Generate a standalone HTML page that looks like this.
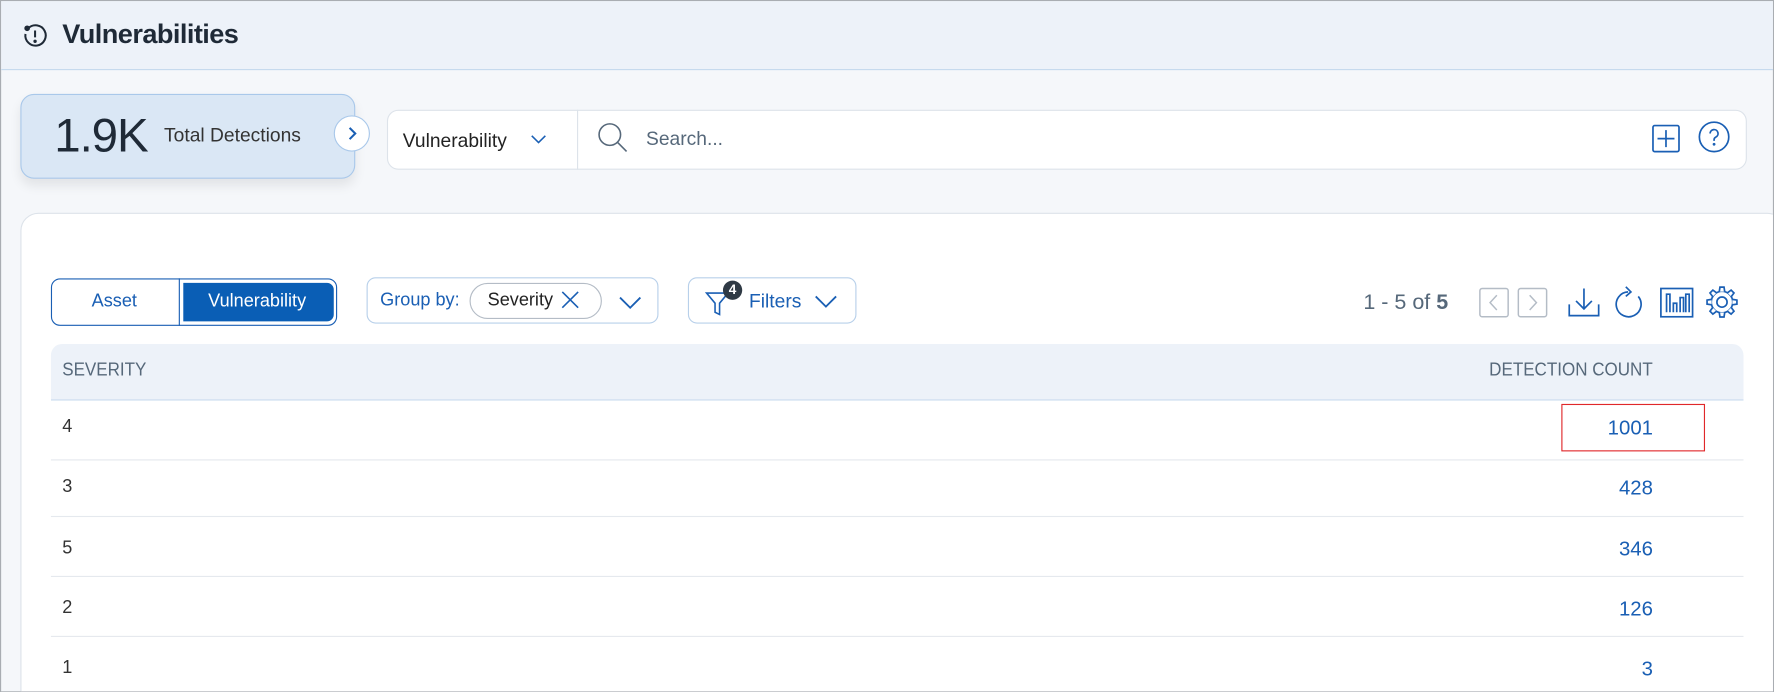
<!DOCTYPE html>
<html><head><meta charset="utf-8"><style>
html,body{margin:0;padding:0;width:1774px;height:692px;overflow:hidden;background:#f5f7fa}
#w{position:absolute;left:0;top:0;width:1568px;height:612px;transform:scale(1.1314);transform-origin:0 0;font-family:"Liberation Sans",sans-serif;background:#f5f7fa;box-sizing:border-box;border:1px solid #a9adb2;overflow:hidden}
.a{position:absolute}
.hdr{left:0;top:0;width:1568px;height:60px;background:#edf2f9;border-bottom:1px solid #c5d9ee}
.t{left:54px;top:16px;font-size:24px;font-weight:bold;color:#1f2a37;letter-spacing:-0.5px}
.card{left:17px;top:82px;width:296px;height:75px;background:#dae7f5;border:1px solid #a9c8ea;border-radius:12px;box-shadow:0 6px 10px rgba(0,0,0,.08);box-sizing:border-box}
.srch{left:341px;top:96px;width:1202px;height:53px;background:#fff;border:1px solid #dde3ea;border-radius:10px;box-sizing:border-box}
.panel{left:17px;top:187px;width:1560px;height:440px;background:#fff;border:1px solid #dde3ea;border-radius:16px;box-sizing:border-box}
.blue{color:#1a5fb4}
.box{border:1px solid #b8d0ea;border-radius:8px;box-sizing:border-box;background:#fff}
.th{left:44px;top:303px;width:1496px;height:50px;background:#edf2f9;border-radius:10px 10px 0 0;border-bottom:1px solid #c5d9ee;box-sizing:border-box}
.hc{font-family:"Liberation Sans Narrow","Liberation Sans",sans-serif;font-size:16px;color:#56687a;top:318px;transform:scaleX(.94)}
.row{left:44px;width:1496px;height:53px;border-bottom:1px solid #e5e9ee;box-sizing:border-box}
.c1{left:54px;font-size:16px;color:#333}
.c2{right:106px;font-size:18px;color:#1a5fb4;text-align:right}
</style></head><body><div id="w">
<div class="a hdr"></div>
<svg class="a" style="left:18px;top:19px" width="24" height="24" viewBox="0 0 24 24" fill="none" stroke="#1f2a37" stroke-width="1.8"><path d="M6 5 A9 9 0 1 1 3.5 10"/><circle cx="5" cy="5" r="1.6" fill="#1f2a37"/><path d="M12 7v6"/><circle cx="12" cy="16.5" r=".6" fill="#1f2a37"/></svg>
<div class="a t">Vulnerabilities</div>
<div class="a card"></div>
<div class="a" style="left:47px;top:95px;font-size:42px;color:#1f2a37;letter-spacing:-1px">1.9K</div>
<div class="a" style="left:144px;top:109px;font-size:17px;color:#333">Total Detections</div>
<div class="a" style="left:294px;top:101px;width:32px;height:32px;border-radius:50%;background:#fff;border:1px solid #a9c8ea;box-sizing:border-box"></div>
<svg class="a" style="left:302px;top:109px" width="16" height="16" viewBox="0 0 16 16" fill="none" stroke="#1a5fb4" stroke-width="1.8"><path d="M6 3l5 5-5 5"/></svg>
<div class="a srch"></div>
<div class="a" style="left:355px;top:114px;font-size:17px;color:#222">Vulnerability</div>
<svg class="a" style="left:467px;top:116px" width="16" height="12" viewBox="0 0 16 12" fill="none" stroke="#1a5fb4" stroke-width="1.4"><path d="M2 3l6 6 6-6"/></svg>
<div class="a" style="left:509px;top:96px;width:1px;height:53px;background:#dde3ea"></div>
<svg class="a" style="left:527px;top:107px" width="28" height="28" viewBox="0 0 28 28" fill="none" stroke="#56687a" stroke-width="1.4"><circle cx="11" cy="11" r="9.5"/><path d="M17.8 17.8l8 8"/></svg>
<div class="a" style="left:570px;top:112px;font-size:17px;color:#56687a">Search...</div>
<svg class="a" style="left:1459px;top:109px" width="25" height="25" viewBox="0 0 25 25" fill="none" stroke="#1a5fb4" stroke-width="1.5"><rect x="1" y="1" width="23" height="23" rx="1.5"/><path d="M12.5 5v15M5 12.5h15"/></svg>
<svg class="a" style="left:1500px;top:106px" width="28" height="28" viewBox="0 0 28 28" fill="none" stroke="#1a5fb4" stroke-width="1.5"><circle cx="14" cy="14" r="13"/><path d="M10.5 11a3.5 3.5 0 1 1 5 3.2c-1 .5-1.5 1.2-1.5 2.3v1"/><circle cx="14" cy="20.5" r=".5" fill="#1a5fb4"/></svg>
<div class="a panel"></div>
<div class="a" style="left:44px;top:245px;width:253px;height:42px;border:1px solid #1a5fb4;border-radius:8px;box-sizing:border-box;background:#fff"></div>
<div class="a" style="left:157px;top:245px;width:1px;height:42px;background:#1a5fb4"></div>
<div class="a" style="left:161px;top:249px;width:133px;height:34px;background:#0a5eb5;border-radius:0 6px 6px 0"></div>
<div class="a blue" style="left:80px;top:257px;font-size:16px">Asset</div>
<div class="a" style="left:183px;top:257px;font-size:16px;color:#fff">Vulnerability</div>
<div class="a box" style="left:323px;top:244px;width:258px;height:41px"></div>
<div class="a blue" style="left:335px;top:256px;font-size:16px">Group by:</div>
<div class="a" style="left:414px;top:249px;width:117px;height:32px;border:1px solid #b4bcc6;border-radius:16px;box-sizing:border-box"></div>
<div class="a" style="left:430px;top:256px;font-size:16px;color:#222">Severity</div>
<svg class="a" style="left:494px;top:255px" width="18" height="18" viewBox="0 0 18 18" fill="none" stroke="#1a5fb4" stroke-width="1.4"><path d="M2 2l14 14M16 2L2 16"/></svg>
<svg class="a" style="left:545px;top:259px" width="22" height="14" viewBox="0 0 22 14" fill="none" stroke="#1a5fb4" stroke-width="1.6"><path d="M2 3l9 9 9-9"/></svg>
<div class="a box" style="left:607px;top:244px;width:149px;height:41px"></div>
<svg class="a" style="left:622px;top:252px" width="30" height="28" viewBox="0 0 30 28" fill="none" stroke="#1a5fb4" stroke-width="1.4"><path d="M1.5 6h19l-7.5 9v10l-4-2v-8z"/></svg>
<div class="a" style="left:638px;top:247px;width:17px;height:17px;border-radius:50%;background:#2f3a45;color:#fff;font-size:12px;font-weight:bold;text-align:center;line-height:17px">4</div>
<div class="a blue" style="left:661px;top:256px;font-size:17px">Filters</div>
<svg class="a" style="left:718px;top:258px" width="22" height="14" viewBox="0 0 22 14" fill="none" stroke="#1a5fb4" stroke-width="1.6"><path d="M2 3l9 9 9-9"/></svg>
<div class="a" style="left:1204px;top:256px;font-size:19px;color:#56687a">1 - 5 of <b>5</b></div>
<svg class="a" style="left:1306px;top:253px" width="62" height="27" viewBox="0 0 62 27" fill="none" stroke="#b4bcc6" stroke-width="1.3"><rect x="1" y="1" width="25" height="25" rx="2"/><rect x="35" y="1" width="25" height="25" rx="2"/><path d="M16 7l-6 6.5 6 6.5M45 7l6 6.5-6 6.5"/></svg>
<svg class="a" style="left:1384px;top:252px" width="30" height="28" viewBox="0 0 30 28" fill="none" stroke="#1a5fb4" stroke-width="1.5"><path d="M2 16v10h26V16M15 2v18M8 13l7 7 7-7"/></svg>
<svg class="a" style="left:1425px;top:251px" width="28" height="30" viewBox="0 0 28 30" fill="none" stroke="#1a5fb4" stroke-width="1.5"><path d="M13 6 A11 11 0 1 0 22 10"/><path d="M11 1.5l4.5 4.5-4.5 4"/></svg>
<svg class="a" style="left:1466px;top:253px" width="30" height="27" viewBox="0 0 30 27" fill="none" stroke="#1a5fb4" stroke-width="1.5"><rect x="1" y="1" width="28" height="25"/><path d="M6 22V6h3v16M12 22v-8h3v8M18 22V9h3v13M23 22V6h3v16"/></svg>
<svg class="a" style="left:1506px;top:251px" width="30" height="30" viewBox="0 0 30 30" fill="none" stroke="#1a5fb4" stroke-width="1.5"><circle cx="15" cy="15" r="4.5"/><circle cx="15" cy="15" r="9.5"/><g fill="#fff"><path id="tt" d="M12.6 5.8 L13.2 1.8 h3.6 L17.4 5.8"/><use href="#tt" transform="rotate(45 15 15)"/><use href="#tt" transform="rotate(90 15 15)"/><use href="#tt" transform="rotate(135 15 15)"/><use href="#tt" transform="rotate(180 15 15)"/><use href="#tt" transform="rotate(225 15 15)"/><use href="#tt" transform="rotate(270 15 15)"/><use href="#tt" transform="rotate(315 15 15)"/></g></svg>
<div class="a th"></div>
<div class="a hc" style="left:54px;transform-origin:left">SEVERITY</div>
<div class="a hc" style="right:106px;transform-origin:right">DETECTION COUNT</div>
<div class="a row" style="top:353px"></div>
<div class="a row" style="top:403px"></div>
<div class="a row" style="top:456px"></div>
<div class="a row" style="top:509px"></div>
<div class="a c1" style="top:368px">4</div><div class="a c2" style="top:367px">1001</div>
<div class="a c1" style="top:421px">3</div><div class="a c2" style="top:420px">428</div>
<div class="a c1" style="top:475px">5</div><div class="a c2" style="top:474px">346</div>
<div class="a c1" style="top:528px">2</div><div class="a c2" style="top:527px">126</div>
<div class="a c1" style="top:581px">1</div><div class="a c2" style="top:580px">3</div>
<div class="a" style="left:1379px;top:356px;width:127px;height:42px;border:1.5px solid #e0282a;box-sizing:border-box"></div>
</div></body></html>
